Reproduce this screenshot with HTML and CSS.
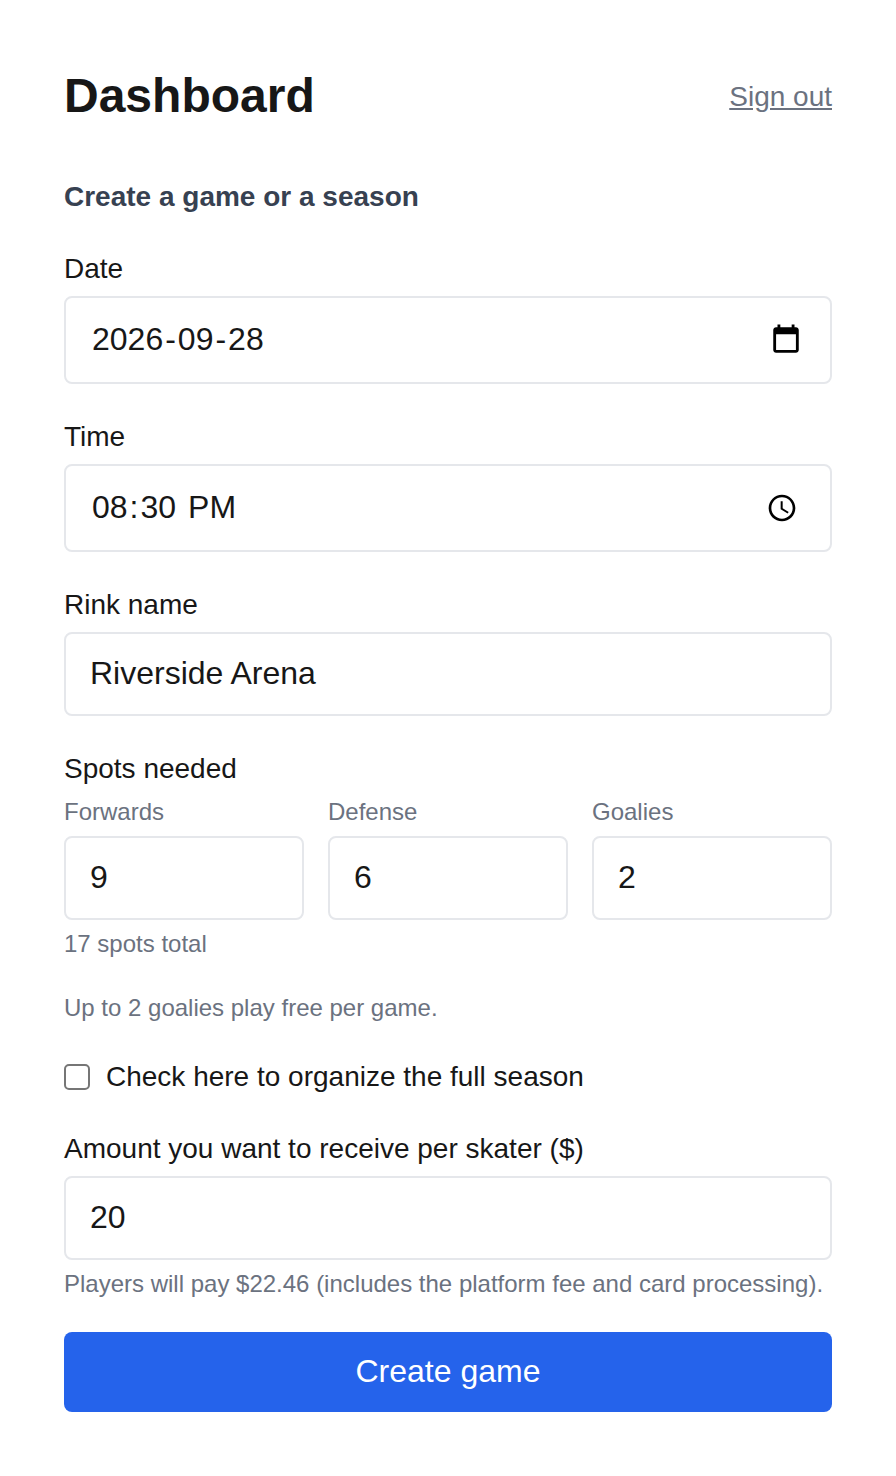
FILE: index.html
```html
<!DOCTYPE html>
<html lang="en">
<head>
<meta charset="utf-8">
<title>Dashboard</title>
<link rel="stylesheet" href="styles.css">
</head>
<body>
<main class="page">
  <header class="top">
    <h1>Dashboard</h1>
    <a class="signout" href="#">Sign out</a>
  </header>
  <h2>Create a game or a season</h2>
  <form class="form">
    <div class="field">
      <label class="label">Date</label>
      <div class="input tall">
        <span class="segs"><span>2026</span><span class="sep">-</span><span>09</span><span class="sep">-</span><span>28</span></span>
        <svg class="picker cal" viewBox="0 0 24 24" aria-hidden="true"><path d="M19 3h-1V1h-2v2H8V1H6v2H5c-1.11 0-1.99.9-1.99 2L3 19c0 1.1.89 2 2 2h14c1.1 0 2-.9 2-2V5c0-1.1-.9-2-2-2zm0 16H5V8h14v11z"/></svg>
      </div>
    </div>
    <div class="field">
      <label class="label">Time</label>
      <div class="input tall">
        <span class="segs"><span>08</span><span class="colon">:</span><span>30</span><span class="ampm">PM</span></span>
        <svg class="picker clock" viewBox="0 0 24 24" aria-hidden="true"><path fill-rule="evenodd" d="M11.99 2C6.47 2 2 6.48 2 12s4.47 10 9.99 10C17.52 22 22 17.52 22 12S17.52 2 11.99 2zM12 20c-4.42 0-8-3.58-8-8s3.58-8 8-8 8 3.58 8 8-3.58 8-8 8z"/><path d="M12.5 7H11v6l5.25 3.15.75-1.23-4.5-2.67z"/></svg>
      </div>
    </div>
    <div class="field">
      <label class="label" for="r">Rink name</label>
      <input id="r" class="input" type="text" value="Riverside Arena">
    </div>
    <div class="field spots">
      <div class="label">Spots needed</div>
      <div class="grid">
        <div class="col"><label class="sub" for="f">Forwards</label><input id="f" class="input" type="text" value="9"></div>
        <div class="col"><label class="sub" for="de">Defense</label><input id="de" class="input" type="text" value="6"></div>
        <div class="col"><label class="sub" for="g">Goalies</label><input id="g" class="input" type="text" value="2"></div>
      </div>
      <p class="hint total">17 spots total</p>
    </div>
    <p class="hint free">Up to 2 goalies play free per game.</p>
    <label class="check"><input type="checkbox"><span>Check here to organize the full season</span></label>
    <div class="field">
      <label class="label" for="a">Amount you want to receive per skater ($)</label>
      <input id="a" class="input" type="text" value="20">
      <p class="hint pay">Players will pay $22.46 (includes the platform fee and card processing).</p>
    </div>
    <button class="submit" type="button">Create game</button>
  </form>
</main>
</body>
</html>
```
FILE: styles.css
```css
* { box-sizing: border-box; }
html, body { margin: 0; background: #fff; }
body { font-family: "Liberation Sans", Arial, sans-serif; color: #171717; }
.page { width: 896px; padding: 64px; }
.top { display: flex; justify-content: space-between; align-items: center; height: 64px; }
h1 { margin: 0; font-size: 48px; line-height: 64px; font-weight: 700; color: #171717; }
.signout { font-size: 28px; line-height: 40px; margin-top: 2px; color: #6b7280; text-decoration: underline; }
h2 { margin: 48px 0 0; font-size: 28px; line-height: 42px; font-weight: 700; color: #374151; }
.form { display: flex; flex-direction: column; margin-top: 30px; }
.field { display: flex; flex-direction: column; margin-bottom: 32px; }
.label { font-size: 28px; line-height: 42px; color: #171717; display: block; margin-bottom: 6px; }
.input { width: 100%; height: 84px; border: 2px solid #e5e7eb; border-radius: 8px; padding: 0 24px 2px; font: 32px "Liberation Sans", Arial, sans-serif; color: #171717; background: #fff; }
.tall { height: 88px; padding: 0 26px; display: flex; align-items: center; justify-content: space-between; }
.segs { display: flex; padding-bottom: 2px; }
.sep { padding: 0 2px; }
.colon { padding: 0 2px; }
.ampm { margin-left: 12px; }
.picker { display: block; flex: none; fill: #000; }
.cal { width: 34px; height: 34px; margin-right: 1px; }
.clock { width: 32px; height: 32px; margin-right: 6px; }
.spots .label { margin-bottom: 0; }
.grid { display: grid; grid-template-columns: repeat(3, 1fr); gap: 24px; }
.col { display: flex; flex-direction: column; }
.sub { font-size: 24px; line-height: 32px; color: #6b7280; margin: 6px 0 8px; }
.hint { margin: 0; font-size: 24px; line-height: 32px; color: #6b7280; }
.total { margin-top: 8px; }
.spots { margin-bottom: 32px; }
.free { margin-bottom: 32px; }
.check { display: flex; align-items: center; gap: 16px; font-size: 28px; line-height: 42px; margin-bottom: 30px; }
.check input { appearance: none; width: 26px; height: 26px; margin: 0; border: 2px solid #767676; border-radius: 5px; background: #fff; }
.pay { margin-top: 8px; }
.submit { height: 80px; border: 0; border-radius: 8px; padding: 0 0 2px; background: #2563eb; color: #fff; font: 32px "Liberation Sans", Arial, sans-serif; }
```
